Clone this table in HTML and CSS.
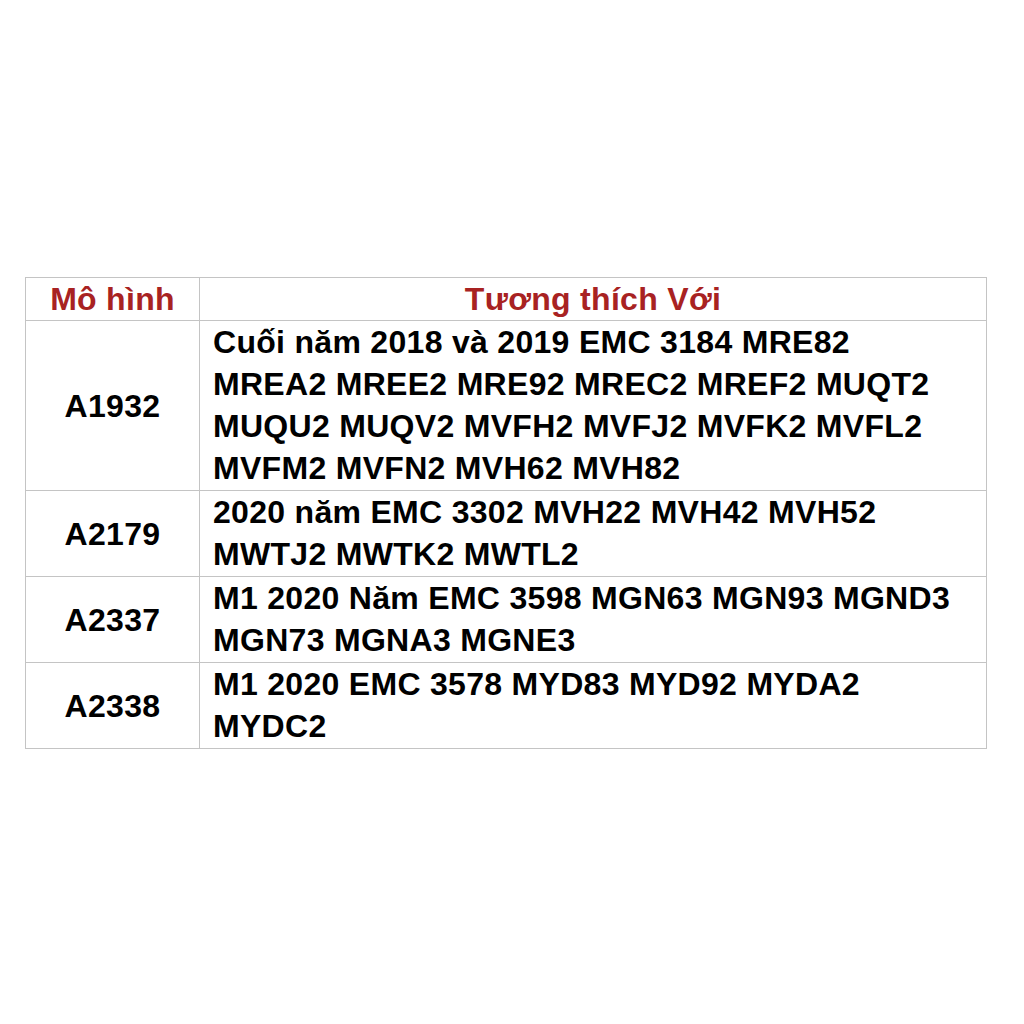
FILE: index.html
```html
<!DOCTYPE html>
<html>
<head>
<meta charset="utf-8">
<link rel="stylesheet" href="styles.css">
</head>
<body>
<div class="page">
  <table class="compat">
    <thead>
      <tr>
        <th class="col-model">Mô hình</th>
        <th class="col-compat">Tương thích Với</th>
      </tr>
    </thead>
    <tbody>
      <tr class="r4">
        <td class="model">A1932</td>
        <td class="list">Cuối năm 2018 và 2019 EMC 3184 MRE82<br>MREA2 MREE2 MRE92 MREC2 MREF2 MUQT2<br>MUQU2 MUQV2 MVFH2 MVFJ2 MVFK2 MVFL2<br>MVFM2 MVFN2 MVH62 MVH82</td>
      </tr>
      <tr>
        <td class="model">A2179</td>
        <td class="list">2020 năm EMC 3302 MVH22 MVH42 MVH52<br>MWTJ2 MWTK2 MWTL2</td>
      </tr>
      <tr>
        <td class="model">A2337</td>
        <td class="list">M1 2020 Năm EMC 3598 MGN63 MGN93 MGND3<br>MGN73 MGNA3 MGNE3</td>
      </tr>
      <tr>
        <td class="model">A2338</td>
        <td class="list">M1 2020 EMC 3578 MYD83 MYD92 MYDA2<br>MYDC2</td>
      </tr>
    </tbody>
  </table>
</div>
</body>
</html>
```
FILE: styles.css
```css
html, body {
  margin: 0;
  padding: 0;
  background: #ffffff;
}
.page {
  width: 1024px;
  height: 1024px;
  padding-top: 277px;
  padding-left: 25px;
  box-sizing: border-box;
}
.compat {
  border-collapse: collapse;
  width: 962px;
  font-family: "Liberation Sans", Arial, sans-serif;
  font-weight: bold;
  font-size: 32px;
  letter-spacing: 0.3px;
  line-height: 42px;
  color: #000;
}
.compat th, .compat td {
  border: 1px solid #c4c4c4;
  padding: 0;
}
.compat th {
  color: #a82222;
  height: 42px;
  text-align: center;
  font-weight: bold;
}
.col-model {
  width: 173px;
}
.model {
  text-align: center;
  vertical-align: middle;
}
.list {
  text-align: left;
  padding: 0 0 1px 13px !important;
  vertical-align: top;
  white-space: nowrap;
}
```
